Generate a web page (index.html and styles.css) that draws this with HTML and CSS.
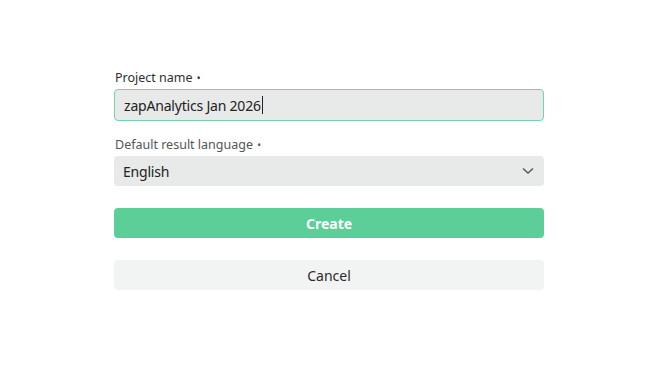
FILE: index.html
```html
<!DOCTYPE html>
<html lang="en">
<head>
    <meta charset="UTF-8">
    <meta name="viewport" content="width=device-width, initial-scale=1.0">
    <title>New project</title>
    <link rel="stylesheet" href="styles.css">
</head>
<body>

    <div class="form">
        <label class="label active">Project name <span class="req">•</span></label>
        <div class="field focused">zapAnalytics Jan 2026<span class="caret"></span></div>

        <label class="label">Default result language <span class="req">•</span></label>
        <div class="field select">
            <span>English</span>
            <svg class="chevron" width="12" height="8" viewBox="0 0 12 8">
                <path d="M1 1.5 L6 6 L11 1.5" fill="none" stroke="#555" stroke-width="1.4"/>
            </svg>
        </div>

        <button class="btn create">Create</button>
        <button class="btn cancel">Cancel</button>
    </div>

</body>
</html>
```

FILE: styles.css
```css
body {
    margin: 0;
    background: #ffffff;
    font-family: 'Noto Sans', 'Open Sans', sans-serif;
    color: #333333;
}

.form {
    width: 430px;
    margin-left: 114px;
    padding-top: 69px;
    display: flex;
    flex-direction: column;
}

.label {
    font-size: 12.5px;
    line-height: 18px;
    color: #555555;
    margin-bottom: 2px;
    padding-left: 1px;
}

.label.active {
    color: #2e2e2e;
}

.req {
    font-size: 10px;
    margin-left: 1px;
}

.field {
    box-sizing: border-box;
    height: 30px;
    padding: 0 9px;
    background: #e8e9e9;
    border-radius: 4px;
    font-size: 14px;
    letter-spacing: -0.2px;
    color: #222222;
    display: flex;
    align-items: center;
}

.field.focused {
    height: 32px;
    border: 1.5px solid #72d5aa;
    margin-bottom: 15px;
}

.caret {
    display: inline-block;
    width: 1px;
    height: 18px;
    background: #222222;
    margin-left: 1px;
}

.select {
    justify-content: space-between;
    margin-bottom: 22px;
}

.chevron {
    margin-right: 1px;
}

.btn {
    height: 30px;
    border: none;
    border-radius: 4px;
    font-family: inherit;
    font-size: 14px;
}

.create {
    background: #5ccf98;
    color: #ffffff;
    font-weight: bold;
    margin-bottom: 22px;
}

.cancel {
    background: #f2f3f3;
    color: #2a2a2a;
}
```
